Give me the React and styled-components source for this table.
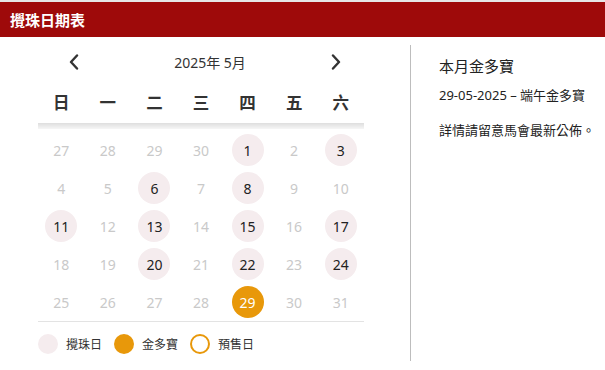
import React from 'react';
import styled, { createGlobalStyle } from 'styled-components';

const GlobalStyle = createGlobalStyle`
  body {
    margin: 0;
    background: #fff;
    font-family: "Noto Sans", "Noto Sans CJK TC", sans-serif;
    color: #222;
  }
`;

const Page = styled.div`
  width: 605px;
  height: 370px;
  border-top: 2px solid #e6e6e6;
  box-sizing: border-box;
  overflow: hidden;
`;

const Header = styled.div`
  height: 35px;
  background: #9e0a0a;
  color: #fff;
  font-size: 15px;
  font-weight: 700;
  display: flex;
  align-items: center;
  padding-left: 10px;
`;

const Body = styled.div`
  display: flex;
  padding-top: 8px;
`;

const CalendarPanel = styled.div`
  width: 411px;
  height: 316px;
  border-right: 1px solid #bdbdbd;
  padding-left: 38px;
  box-sizing: border-box;
`;

const Calendar = styled.div`
  width: 326px;
`;

const Nav = styled.div`
  height: 33px;
  display: flex;
  align-items: center;
  justify-content: space-between;
  padding: 0 23px 0 31px;
`;

const NavButton = styled.button`
  border: 0;
  background: none;
  padding: 0;
  width: 10px;
  height: 16px;
  display: flex;
  cursor: pointer;
`;

const MonthLabel = styled.div`
  font-size: 14px;
  color: #333;
  margin-left: 10px;
`;

const Weekdays = styled.div`
  display: grid;
  grid-template-columns: repeat(7, 1fr);
  height: 45px;
  align-items: center;
  padding-top: 2px;
  box-sizing: border-box;
`;

const Weekday = styled.div`
  text-align: center;
  font-size: 16.5px;
  font-weight: 700;
  color: #333;
`;

const Shadow = styled.div`
  height: 6px;
  background: linear-gradient(#dedede, #f6f6f6);
  margin-bottom: 2px;
`;

const Grid = styled.div`
  display: grid;
  grid-template-columns: repeat(7, 1fr);
  grid-auto-rows: 38px;
  border-bottom: 1px solid #e3e3e3;
`;

const Cell = styled.div`
  display: flex;
  align-items: center;
  justify-content: center;
`;

const Day = styled.div`
  width: 32px;
  height: 32px;
  border-radius: 50%;
  display: flex;
  align-items: center;
  justify-content: center;
  font-size: 14px;
  background: ${p => (p.kind === 'jackpot' ? '#e8980a' : p.kind === 'draw' ? '#f5ecee' : 'transparent')};
  color: ${p => (p.kind === 'jackpot' ? '#fff' : p.kind === 'draw' ? '#222' : '#c9c9c9')};
`;

const Legend = styled.div`
  display: flex;
  align-items: center;
  margin-top: 12px;
`;

const LegendItem = styled.div`
  display: flex;
  align-items: center;
  gap: 8px;
  margin-right: 12px;
  font-size: 12px;
  color: #333;
`;

const Swatch = styled.span`
  width: 20px;
  height: 20px;
  border-radius: 50%;
  box-sizing: border-box;
  background: ${p => p.fill};
  border: ${p => (p.ring ? `2px solid ${p.ring}` : 'none')};
`;

const InfoPanel = styled.div`
  flex: 1;
  padding: 11px 0 0 28px;
`;

const InfoTitle = styled.div`
  font-size: 15px;
  line-height: 20px;
  color: #222;
`;

const InfoLine = styled.div`
  font-size: 13px;
  line-height: 18px;
  color: #222;
  margin-top: ${p => p.gap}px;
`;

const Chevron = ({ dir }) => (
  <svg width="10" height="16" viewBox="0 0 10 16">
    <path
      d={dir === 'left' ? 'M8 1.5 L2 8 L8 14.5' : 'M2 1.5 L8 8 L2 14.5'}
      fill="none"
      stroke="#333"
      strokeWidth="2.4"
      strokeLinecap="round"
      strokeLinejoin="round"
    />
  </svg>
);

const weekdays = ['日', '一', '二', '三', '四', '五', '六'];
const drawDays = [1, 3, 6, 8, 11, 13, 15, 17, 20, 22, 24];
const jackpotDays = [29];

const days = [
  ...[27, 28, 29, 30].map(n => ({ n, key: 'p' + n, kind: 'other' })),
  ...Array.from({ length: 31 }, (_, i) => {
    const n = i + 1;
    const kind = jackpotDays.includes(n) ? 'jackpot' : drawDays.includes(n) ? 'draw' : 'none';
    return { n, key: 'd' + n, kind };
  }),
];

export default function App() {
  return (
    <Page>
      <GlobalStyle />
      <Header>攪珠日期表</Header>
      <Body>
        <CalendarPanel>
          <Calendar>
            <Nav>
              <NavButton aria-label="上月"><Chevron dir="left" /></NavButton>
              <MonthLabel>2025年 5月</MonthLabel>
              <NavButton aria-label="下月"><Chevron dir="right" /></NavButton>
            </Nav>
            <Weekdays>
              {weekdays.map(w => <Weekday key={w}>{w}</Weekday>)}
            </Weekdays>
            <Shadow />
            <Grid>
              {days.map(d => (
                <Cell key={d.key}>
                  <Day kind={d.kind}>{d.n}</Day>
                </Cell>
              ))}
            </Grid>
            <Legend>
              <LegendItem><Swatch fill="#f5ecee" />攪珠日</LegendItem>
              <LegendItem><Swatch fill="#e8980a" />金多寶</LegendItem>
              <LegendItem><Swatch fill="#fff" ring="#e8980a" />預售日</LegendItem>
            </Legend>
          </Calendar>
        </CalendarPanel>
        <InfoPanel>
          <InfoTitle>本月金多寶</InfoTitle>
          <InfoLine gap={10}>29-05-2025 – 端午金多寶</InfoLine>
          <InfoLine gap={17}>詳情請留意馬會最新公佈。</InfoLine>
        </InfoPanel>
      </Body>
    </Page>
  );
}
